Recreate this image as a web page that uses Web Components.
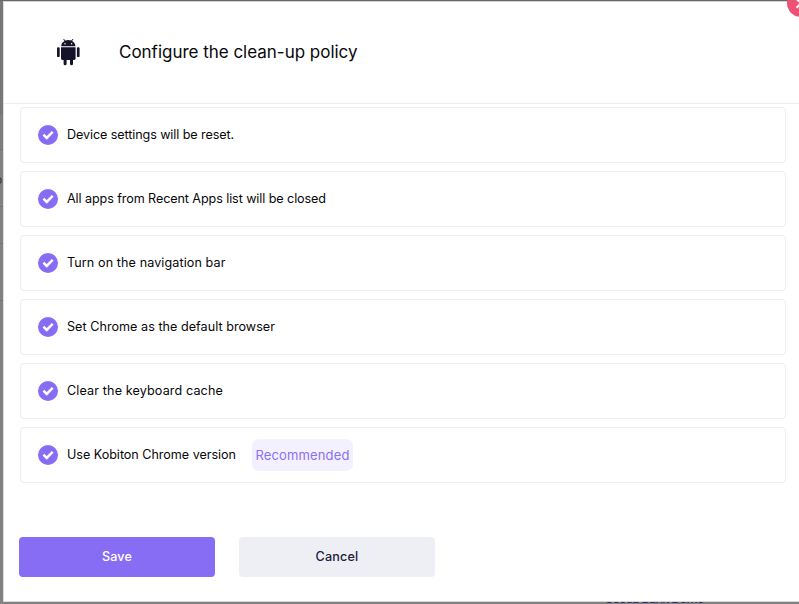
<!DOCTYPE html>
<html lang="en">
<head>
<meta charset="utf-8">
<title>Clean-up policy</title>
<style>
html,body{margin:0;width:799px;height:604px;overflow:hidden}
body{font-family:Inter,"Open Sans",sans-serif;color:#08080a;background:#7f7f7f}
</style>
</head>
<body>
<policy-screen></policy-screen>
<script>
// A single line of text spread over a given width.
class FitText extends HTMLElement {
  connectedCallback() {
    const root = this.attachShadow({mode:'open'});
    root.innerHTML = `<style>:host{display:inline-block;white-space:nowrap;flex:none;line-height:20px}</style><span><slot></slot></span>`;
    const width = Number(this.getAttribute('width'));
    const span = root.querySelector('span');
    const gap = (width - span.getBoundingClientRect().width) / this.textContent.length;
    this.style.letterSpacing = gap.toFixed(3) + 'px';
    this.style.width = width + 'px';
  }
}

class AndroidIcon extends HTMLElement {
  connectedCallback() {
    this.attachShadow({mode:'open'}).innerHTML = `<style>:host{display:block;width:24px;height:27px;flex:none}svg{display:block}</style>
    <svg width="24" height="27" viewBox="0 0 24 27" fill="#15132a">
      <path d="M5.2 7.2C5.3 4.8 6.6 3 8.5 2L7.2.3 8 0l1.3 1.6a8.2 8.2 0 0 1 6 0L16.6 0l.8.3L16.1 2c1.9 1 3.2 2.8 3.3 5.2z"/>
      <circle cx="9" cy="4.7" r=".75" fill="#fff"/><circle cx="15.6" cy="4.7" r=".75" fill="#fff"/>
      <path d="M5 8.3h14.6v11.3a1.4 1.4 0 0 1-1.4 1.4H17v3.8a1.5 1.5 0 0 1-3 0V21h-3.4v3.8a1.5 1.5 0 0 1-3 0V21H6.4A1.4 1.4 0 0 1 5 19.6z"/>
      <rect x="1" y="8.3" width="2.7" height="9.8" rx="1.2"/><rect x="20.9" y="8.3" width="2.7" height="9.8" rx="1.2"/>
    </svg>`;
  }
}

class CheckMark extends HTMLElement {
  connectedCallback() {
    this.attachShadow({mode:'open'}).innerHTML = `<style>:host{display:block;width:20px;height:20px;flex:none}svg{display:block}</style>
    <svg width="20" height="20" viewBox="0 0 20 20"><circle cx="10" cy="10" r="10" fill="#866df3"/><path d="M5.4 9.7l3.3 3.2 6-6" fill="none" stroke="#fff" stroke-width="2.5"/></svg>`;
  }
}

class PolicyRow extends HTMLElement {
  connectedCallback() {
    this.attachShadow({mode:'open'}).innerHTML = `<style>
      :host{display:flex;align-items:center;box-sizing:border-box;height:56px;border:1px solid #eeeeef;border-radius:4px;padding-left:17px;font-size:12.6px}
      check-mark{margin-right:9px}
      </style><check-mark></check-mark><slot></slot><slot name="badge"></slot>`;
  }
}

class PolicyBadge extends HTMLElement {
  connectedCallback() {
    this.attachShadow({mode:'open'}).innerHTML = `<style>
      :host{display:flex;align-items:center;justify-content:center;width:101px;height:32px;margin-left:16px;border-radius:7px;background:#f4f1fe;color:#8a70f3;font-size:13px}
      </style><slot></slot>`;
  }
}

class PolicyButton extends HTMLElement {
  connectedCallback() {
    this.attachShadow({mode:'open'}).innerHTML = `<style>
      :host{display:block;width:196px;height:40px}
      button{display:flex;align-items:center;justify-content:center;width:100%;height:100%;padding:0;border:0;border-radius:4px;background:#eeeff5;color:#22203a;font:500 12.6px Inter,sans-serif}
      :host([primary]) button{background:#866df3;color:#fff}
      </style><button><slot></slot></button>`;
  }
}

class PolicyDialog extends HTMLElement {
  connectedCallback() {
    this.attachShadow({mode:'open'}).innerHTML = `<style>
      :host{display:flex;flex-direction:column;box-sizing:border-box;background:#fff;border-left:1px solid #dedede;border-top:1px solid #d4d4d4;border-bottom:1px solid #d8d8d8}
      header{display:flex;align-items:center;box-sizing:border-box;height:102px;padding:0 0 1px 52px;border-bottom:1px solid #eeeeef;font-size:17px}
      header ::slotted(fit-text){margin-left:39px}
      .rows{display:flex;flex-direction:column;gap:8px;padding:3px 14px 0 16px}
      footer{display:flex;gap:24px;padding:54px 0 0 15px}
      </style>
      <header><android-icon></android-icon><slot name="title"></slot></header>
      <div class="rows"><slot></slot></div>
      <footer><slot name="actions"></slot></footer>`;
  }
}

class PolicyScreen extends HTMLElement {
  connectedCallback() {
    this.attachShadow({mode:'open'}).innerHTML = `<style>
      :host{display:block;position:relative;width:799px;height:604px;overflow:hidden;background:linear-gradient(#686868 0 1px,#777 1px 113px,#7d7d7d 113px 150px,#818181 150px)}
      policy-dialog{position:absolute;left:3px;top:1px;width:797px;height:601px}
      .project{position:absolute;left:605px;top:589px;font-size:12.5px;font-weight:500;color:#33276f}
      .edge{position:absolute;left:-5px;top:170px;font-size:12px;line-height:20px;color:#333}
      .line{position:absolute;left:0;width:3px;height:1px;background:#727272}
      .close{position:absolute;left:787px;top:-11px}
      </style>
      <i class="line" style="top:113px"></i><i class="line" style="top:149px"></i><i class="line" style="top:206px"></i><i class="line" style="top:243px"></i><i class="line" style="top:300px"></i>
      <span class="edge">o</span>
      <fit-text class="project" width="99">Scotia Bank Demo</fit-text>
      <policy-dialog>
        <fit-text slot="title" width="238.5">Configure the clean-up policy</fit-text>
        <policy-row><fit-text width="167">Device settings will be reset.</fit-text></policy-row>
        <policy-row><fit-text width="259">All apps from Recent Apps list will be closed</fit-text></policy-row>
        <policy-row><fit-text width="158.5">Turn on the navigation bar</fit-text></policy-row>
        <policy-row><fit-text width="208">Set Chrome as the default browser</fit-text></policy-row>
        <policy-row><fit-text width="156">Clear the keyboard cache</fit-text></policy-row>
        <policy-row><fit-text width="169">Use Kobiton Chrome version</fit-text><policy-badge slot="badge"><fit-text width="94">Recommended</fit-text></policy-badge></policy-row>
        <policy-button slot="actions" primary><fit-text width="30">Save</fit-text></policy-button>
        <policy-button slot="actions"><fit-text width="43">Cancel</fit-text></policy-button>
      </policy-dialog>
      <svg class="close" width="28" height="28" viewBox="0 0 28 28"><circle cx="14" cy="14" r="14" fill="#ec5176"/><path d="M9.5 18.8l9-9M9.5 9.8l9 9" stroke="#fff" stroke-width="2"/></svg>`;
  }
}

// Containers come first so that texts are measured once their font sizes apply.
customElements.define('android-icon', AndroidIcon);
customElements.define('check-mark', CheckMark);
customElements.define('policy-row', PolicyRow);
customElements.define('policy-badge', PolicyBadge);
customElements.define('policy-button', PolicyButton);
customElements.define('policy-dialog', PolicyDialog);
customElements.define('policy-screen', PolicyScreen);
customElements.define('fit-text', FitText);
</script>
</body>
</html>
